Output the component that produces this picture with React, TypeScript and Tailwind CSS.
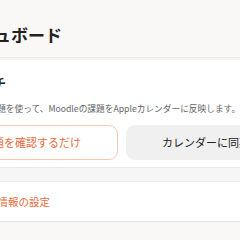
const App = () => {
  return (
    <div
      className="w-[240px] h-[240px] overflow-hidden bg-[#f9f8f6] text-[#222]"
      style={{ fontFamily: '"Noto Sans CJK JP", "Noto Sans", sans-serif' }}
    >
      <div className="ml-[-71px] w-[400px]">
        <header className="h-[58px] flex items-end pb-[14px] px-4 border-b border-[#ebeae8]">
          <h1 className="ml-[-2px] text-[17px] font-bold leading-none">ダッシュボード</h1>
        </header>

        <section className="bg-white pt-[14px] pb-[7px] px-4 border-t-2 border-[#f3f3f2] border-b border-b-[#e8e8e8]">
          <h2 className="ml-[-4px] text-[13px] font-bold leading-[18px]">ワンタッチ</h2>
          <p className="mt-[10px] text-[8.7px] leading-[14px] text-[#666]">
            受け取った課題を使って、Moodleの課題をAppleカレンダーに反映します。
          </p>
          <div className="mt-[9px] flex gap-2">
            <button className="w-[173px] h-[35px] rounded-[9px] border border-[#f7c6b0] bg-white text-[11px] text-[#ea6a3c]">
              課題を確認するだけ
            </button>
            <button className="w-[182px] h-[35px] rounded-[9px] bg-[#f0f0f0] text-[11px] text-[#222]">
              カレンダーに同期する
            </button>
          </div>
        </section>

        <div className="h-[13px] bg-[#f6f6f6]" />

        <section className="bg-white h-[41px] px-4 flex items-center border-t border-[#ececec] border-b border-b-[#e6e6e6]">
          <span className="text-[10.5px] text-[#ea6a3c]">アカウント情報の設定</span>
        </section>
      </div>
    </div>
  );
};

export default App;
